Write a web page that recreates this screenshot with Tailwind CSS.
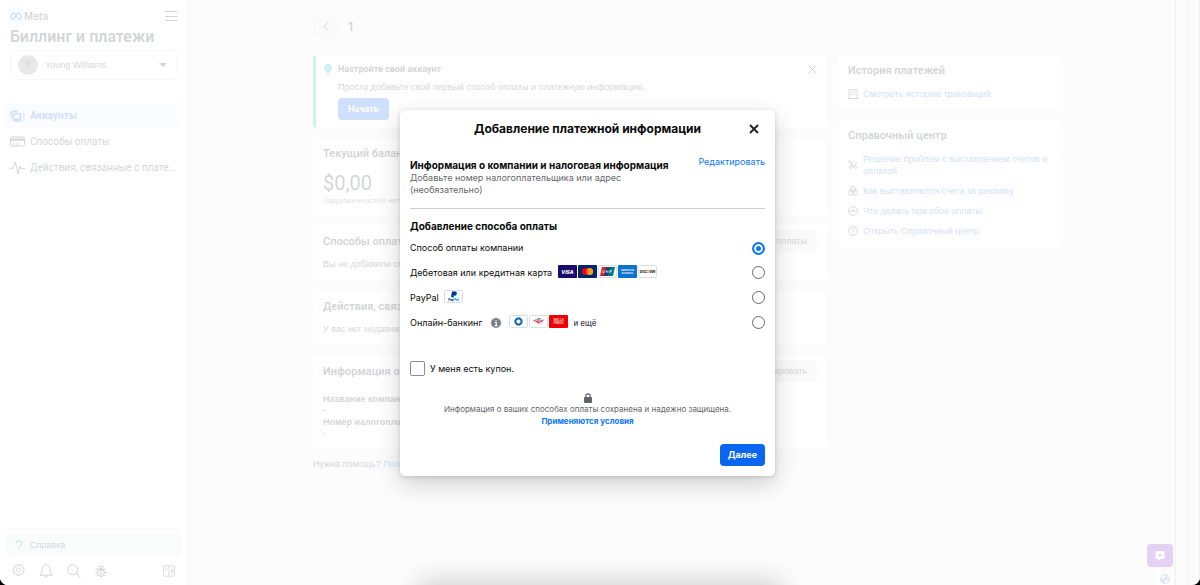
<!DOCTYPE html>
<html lang="ru">
<head>
    <meta charset="UTF-8">
    <meta name="viewport" content="width=device-width, initial-scale=1.0">
    <title>Биллинг и платежи</title>
    <script src="https://cdn.jsdelivr.net/npm/@tailwindcss/browser@4"></script>
</head>
<body class="bg-black">
<div class="relative flex h-screen overflow-hidden rounded-b-[8px] bg-[#f0f2f5] font-['Liberation_Sans',sans-serif] text-[9px] leading-[12px] text-[#1c2b33]">

    <!-- Sidebar -->
    <aside class="flex w-[187px] shrink-0 flex-col bg-white px-[5px] font-['Roboto',sans-serif]">
        <div class="flex items-center justify-between px-[5px] pt-2">
            <a href="#" class="flex items-center gap-[2px] font-['Inter',sans-serif] text-[10px] leading-[16px] font-medium">
                <svg class="h-[8px] w-[12px]" viewBox="0 0 24 16" fill="none" stroke="#0866ff" stroke-width="3"><path d="M2 11C2 6 4 2 7 2c5 0 6 12 11 12 3 0 4-2 4-4 0-5-2-8-5-8-5 0-6 12-12 12-2 0-3-1-3-3z"/></svg>
                Meta
            </a>
            <button type="button" aria-label="Меню">
                <svg class="size-[12px]" viewBox="0 0 12 12" stroke="#1c2b33" stroke-width="1"><path d="M0 1.500h12M0 6.500h12M0 10.500h12"/></svg>
            </button>
        </div>
        <h1 class="px-[5px] pt-1 text-[16px] leading-[18px] font-semibold whitespace-nowrap">Биллинг и платежи</h1>
        <button type="button" class="mx-[5px] mt-1 flex h-[30px] items-center rounded-[4px] border border-[#dadde1] px-[7px] font-['Liberation_Sans',sans-serif]">
            <span class="flex size-[20px] items-center justify-center rounded-full bg-[#8a8d91] text-[10px] font-bold text-[#4b4f56]">Y</span>
            <span class="ml-[7px] flex-1 text-left text-[9px]">Young Williams</span>
            <svg class="mr-[2px] h-[4px] w-[8px]" viewBox="0 0 8 4" fill="#1c2b33"><path d="M0 0h8L4 4z"/></svg>
        </button>

        <nav class="mt-[23px] flex flex-col gap-[1px] text-[10px]">
            <a href="#" class="flex h-[25px] items-center gap-[5px] rounded-[4px] bg-[#e5efff] px-[5px] font-bold text-[#0a66f5]">
                <svg class="h-[12px] w-[15px]" viewBox="0 0 15 12" fill="none" stroke="#0a66f5" stroke-width="1.500"><path d="M2 8 1 3q0-1.500 1.500-1.500L8 1"/><rect x="3.500" y="3.500" width="7" height="7.500" rx="1.500"/><path d="M3.500 9.500h7M13 4h1.500M13 7h1.500M13 10h1.500"/></svg>
                Аккаунты
            </a>
            <a href="#" class="flex h-[25px] items-center gap-[5px] px-[5px]">
                <svg class="h-[11px] w-[15px]" viewBox="0 0 15 11" fill="none" stroke="#1c2b33"><rect x=".5" y="1" width="14" height="9" rx="1.500"/><path d="M.5 3.700h14" stroke-width="2"/><path d="M2 8h3M6 8h3"/></svg>
                Способы оплаты
            </a>
            <a href="#" class="flex h-[25px] items-center gap-[5px] px-[5px] whitespace-nowrap">
                <svg class="h-[14px] w-[15px] shrink-0" viewBox="0 0 15 14" fill="none" stroke="#1c2b33" stroke-linejoin="round"><path d="M0 7.500h2.500L5.500.8 8 13.200l2-8 1.200 2.300H15"/></svg>
                Действия, связанные с плате...
            </a>
        </nav>

        <div class="mx-[5px] mt-auto border-t border-[#ccd0d5]"></div>
        <a href="#" class="mt-[5px] flex h-[22px] items-center rounded-[4px] bg-[#dcf5f0] pl-[10px] font-['Liberation_Sans',sans-serif]">
            <svg class="h-[11px] w-[8px]" viewBox="0 0 8 11" fill="none" stroke="#1f8a9c" stroke-width="1.200"><path d="M1 3.500C1 0 7 0 7 3.200 7 5.500 4 5 4 8"/><path d="M4 9.300v1.300"/></svg>
            <span class="ml-[7px]">Справка</span>
        </a>
        <div class="flex h-[29px] items-center gap-[14px] px-[7px]">
            <button type="button" aria-label="Настройки"><svg class="size-[13px]" viewBox="0 0 13 13" fill="none" stroke="#1c2b33" stroke-width=".9" stroke-linejoin="round"><path d="M5.300.6h2.400l.4 1.500 1.400-.8 1.700 1.700-.7 1.300 1.600.5v2.400l-1.600.5.8 1.500-1.700 1.600-1.500-.8-.4 1.600H5.300l-.5-1.600-1.400.8-1.700-1.700.8-1.400-1.600-.5V4.900l1.600-.5-.8-1.500L3.300 1.300l1.500.8z"/><circle cx="6.500" cy="6.100" r="2"/></svg></button>
            <button type="button" aria-label="Уведомления"><svg class="size-[14px]" viewBox="0 0 13 13" fill="none" stroke="#1c2b33" stroke-width=".9" stroke-linejoin="round"><path d="M1 10.500c1.800-2 1.500-4 2-6.500.5-4.200 6.500-4.200 7 0 .5 2.500.2 4.500 2 6.500zM5 10.600c.2 2 2.800 2 3 0"/></svg></button>
            <button type="button" aria-label="Поиск"><svg class="size-[14px]" viewBox="0 0 14 14" fill="none" stroke="#1c2b33"><circle cx="5.700" cy="5.700" r="4.900"/><path d="m9.300 9.300 4.200 4.200"/></svg></button>
            <button type="button" aria-label="Сообщить об ошибке"><svg class="size-[12px]" viewBox="0 0 12 12" fill="none" stroke="#1c2b33"><rect x="3" y="3.500" width="6" height="8" rx="3"/><path d="M4 3.500c0-2.700 4-2.700 4 0M6 4v7.500M3 5 1 3.500M3 7.500H.3M3.300 9.500 1 11M9 5l2-1.500M9 7.500h2.700M8.700 9.500 11 11M4 .3l.8 1M8 .3l-.8 1M3.200 5h5.600"/></svg></button>
            <button type="button" aria-label="Свернуть меню" class="ml-auto"><svg class="size-[12px]" viewBox="0 0 12 12" fill="none" stroke="#1c2b33" stroke-width=".8"><rect x=".5" y=".8" width="11" height="10.400" rx=".8"/><path d="M6 1v10M2 3h2M2 5.200h2M9.500 4.300 8 6l1.500 1.700z"/></svg></button>
        </div>
    </aside>

    <!-- Billing page -->
    <main class="flex-1">
        <div class="mx-auto w-[749px]">
            <div class="mt-[15px] flex h-[23px] items-center gap-[10px]">
                <button type="button" aria-label="Назад" class="flex h-[23px] w-[25px] items-center justify-center rounded-[4px] bg-[#e4e6eb]">
                    <svg class="h-[9px] w-[6px]" viewBox="0 0 6 9" fill="none" stroke="#1c2b33"><path d="M5 .5 1 4.500l4 4"/></svg>
                </button>
                <h2 class="font-['Inter',sans-serif] text-[12px] font-semibold">1</h2>
            </div>

            <div class="mt-[17px] grid grid-cols-[514px_1fr] items-start gap-[11px]">
                <div class="flex flex-col gap-[10px]">
                    <section class="flex h-[73px] rounded-[4px] border-l-[3px] border-[#00c79f] bg-white px-2 pt-2">
                        <svg class="mt-[1px] h-[11px] w-[8px]" viewBox="0 0 8 11" fill="#00c79f"><path d="M4 0a4 4 0 0 1 4 4c0 2-1.500 2.500-2 4H2C1.500 6.500 0 6 0 4a4 4 0 0 1 4-4zM2.400 8.700h3.200L5 10.500H3z"/></svg>
                        <div class="ml-[6px] flex-1">
                            <h3 class="font-['Roboto',sans-serif] font-bold">Настройте свой аккаунт</h3>
                            <p class="mt-[6px]">Просто добавьте свой первый способ оплаты и платежную информацию.</p>
                            <button type="button" class="mt-[5px] h-[22px] rounded-[4px] bg-[#0a66f5] px-[10px] font-['Roboto',sans-serif] font-bold text-white">Начать</button>
                        </div>
                        <button type="button" aria-label="Закрыть" class="mt-[2px] mr-[2px] self-start"><svg class="size-[9px]" viewBox="0 0 9 9" stroke="#1c2b33"><path d="m.5.5 8 8m0-8-8 8"/></svg></button>
                    </section>

                    <section class="h-[77px] rounded-[4px] bg-white px-[10px] pt-[10px]">
                        <h3 class="font-['Roboto',sans-serif] text-[11px] font-semibold">Текущий баланс</h3>
                        <p class="mt-[11px] font-['Roboto',sans-serif] text-[20px] leading-[24px]">$0,00</p>
                        <p class="text-[8px] text-[#606770]">Задолженностей нет.</p>
                    </section>

                    <section class="relative h-[55px] rounded-[4px] bg-white px-[10px] pt-[11px]">
                        <h3 class="font-['Roboto',sans-serif] text-[11px] font-semibold">Способы оплаты</h3>
                        <p class="mt-[10px]">Вы не добавили способов оплаты.</p>
                        <button type="button" class="absolute top-[5px] right-[10px] h-[22px] rounded-[4px] bg-[#e4e6eb] px-[10px]">Добавить способ оплаты</button>
                    </section>

                    <section class="h-[55px] rounded-[4px] bg-white px-[10px] pt-[11px]">
                        <h3 class="font-['Roboto',sans-serif] text-[11px] font-semibold">Действия, связанные с платежами</h3>
                        <p class="mt-[10px]">У вас нет недавних действий.</p>
                    </section>

                    <section class="relative h-[93px] rounded-[4px] bg-white px-[10px] pt-[11px]">
                        <h3 class="font-['Roboto',sans-serif] text-[11px] font-semibold">Информация о компании</h3>
                        <p class="mt-[15px] font-bold">Название компании</p>
                        <p class="leading-[11px]">-</p>
                        <p class="font-bold">Номер налогоплательщика</p>
                        <p class="leading-[11px]">-</p>
                        <button type="button" class="absolute top-[5px] right-[10px] h-[22px] rounded-[4px] bg-[#e4e6eb] px-[10px]">Редактировать</button>
                    </section>
                    <p>Нужна помощь? <a href="#" class="text-[#0a66f5]">Получить поддержку</a></p>
                </div>

                <div class="flex flex-col gap-[10px] text-[#0a5ad8]">
                    <section class="h-[55px] rounded-[4px] bg-white px-[10px] pt-[10px]">
                        <h3 class="font-['Roboto',sans-serif] text-[11px] font-semibold text-[#1c2b33]">История платежей</h3>
                        <a href="#" class="mt-[11px] flex items-center gap-[5px]">
                            <svg class="size-[10px]" viewBox="0 0 10 10" fill="none" stroke="#1c2b33" stroke-width=".8"><path d="M1 9.500V.5l1.500.7L4 .5l1.300.7L7 .5l1 .7 1.200-.7v9zM0 9.500h10M2.500 3.500H4M5.500 3.500h2M2.500 5.500H4M5.500 5.500h2"/></svg>
                            Смотреть историю транзакций
                        </a>
                    </section>
                    <section class="flex flex-col gap-2 rounded-[4px] bg-white px-[10px] pt-[10px] pb-[10px]">
                        <h3 class="mb-[3px] font-['Roboto',sans-serif] text-[11px] font-semibold text-[#1c2b33]">Справочный центр</h3>
                        <a href="#" class="flex items-center gap-[5px]">
                            <svg class="size-[10px] shrink-0" viewBox="0 0 11 11" fill="none" stroke="#1c2b33" stroke-width=".9"><path d="M3.500 4.500 7.800 8.800c1 1 2.500-.5 1.500-1.500L7 5.500M4.500 5.500 2 7.700C.5 9 2 10.500 3.300 9.200L9.500 3M7.500 1 6 2.500M10 3.500 8.500 5M.8 2.500 3 4.500l1.500-1.300L2.500 1C1.500.5.300 1.500.8 2.500z"/></svg>
                            Решение проблем с выставлением счетов и оплатой
                        </a>
                        <a href="#" class="flex items-center gap-[5px]">
                            <svg class="size-[10px] shrink-0" viewBox="0 0 10 10" fill="none" stroke="#1c2b33" stroke-width=".8"><circle cx="5" cy="3.300" r="2.800"/><circle cx="3.300" cy="6.500" r="2.800"/><circle cx="6.700" cy="6.500" r="2.800"/></svg>
                            Как выставляются счета за рекламу
                        </a>
                        <a href="#" class="flex items-center gap-[5px]">
                            <svg class="size-[10px] shrink-0" viewBox="0 0 10 10" fill="none" stroke="#1c2b33" stroke-width=".8"><circle cx="5" cy="5" r="4.500"/><path d="M2.500 5h5" stroke-width="1.200"/></svg>
                            Что делать при сбое оплаты
                        </a>
                        <a href="#" class="flex items-center gap-[5px]">
                            <svg class="size-[10px] shrink-0" viewBox="0 0 10 10" fill="none" stroke="#1c2b33" stroke-width=".8"><circle cx="5" cy="5" r="4.500"/><path d="M3.600 4.200c0-2 2.900-2 2.900-.2C6.500 5 5 5 5 6.200M5 7v.8"/></svg>
                            Открыть Справочный центр
                        </a>
                    </section>
                </div>
            </div>
        </div>
    </main>

    <!-- Right rail -->
    <div class="w-3 shrink-0 border-x border-[#b8bbc0]"></div>
    <div class="absolute inset-y-0 right-6 border-l border-[#b8bbc0]"></div>
    <div class="absolute right-[27px] bottom-0 flex flex-col items-end gap-[3px]">
        <button type="button" aria-label="Оставить отзыв" class="flex h-[23px] w-[26px] items-center justify-center rounded-[4px] bg-[#7a18c4]">
            <svg class="size-[10px]" viewBox="0 0 10 10"><path fill="#fff" d="M2 0h6q1.500 0 1.500 1.500v5Q9.500 8 8 8H5.500L3 10V8H2Q.5 8 .5 6.500v-5Q.5 0 2 0z"/><circle cx="5" cy="4" r="1.500" fill="#7a18c4"/></svg>
        </button>
        <button type="button" aria-label="Язык" class="flex h-[15px] w-[17px] items-center justify-center bg-white pt-[3px] shadow">
            <svg class="size-[10px]" viewBox="0 0 10 10"><circle cx="5" cy="5" r="5" fill="#5b78c4"/><path fill="#fff" d="M2 2l3-1 .5 1.500L4 4v1.500L2.500 5 1 4zM5 6l2-.5L8 7 6.500 9 5 8zM7 2l2 1v2L7.500 4z"/></svg>
        </button>
    </div>

    <div class="absolute inset-0 bg-white/80"></div>
    <div class="absolute inset-x-[420px] -bottom-5 h-5 rounded-[8px] shadow-[0_0_26px_4px_rgba(0,0,0,0.18)]"></div>

    <!-- Payment dialog -->
    <div class="absolute inset-0 flex justify-center">
        <div role="dialog" aria-labelledby="dialogTitle" class="mt-[110px] mr-[25px] flex h-fit w-[375px] flex-col rounded-[5px] bg-white px-[10px] pb-[10px] font-['Inter',sans-serif] text-[#0a0a0a] shadow-[0_8px_24px_rgba(0,0,0,0.18),0_1px_4px_rgba(0,0,0,0.15)]">
            <div class="grid h-[38px] grid-cols-[22px_1fr_22px] items-center">
                <h2 id="dialogTitle" class="col-start-2 text-center text-[12px] leading-[16px] font-bold">Добавление платежной информации</h2>
                <button type="button" aria-label="Закрыть" class="justify-self-center"><svg class="size-[10px]" viewBox="0 0 10 10" stroke="#1c1e21" stroke-width="1.800"><path d="m1 1 8 8m0-8L1 9"/></svg></button>
            </div>
            <div class="mt-2 flex justify-between border-b border-[#ccd0d5] pb-3">
                <div>
                    <h3 class="mt-[2px] text-[10px] leading-[14px] font-bold whitespace-nowrap">Информация о компании и налоговая информация</h3>
                    <p class="max-w-[250px] text-[9px] text-[#65676b]">Добавьте номер налогоплательщика или адрес (необязательно)</p>
                </div>
                <a href="#" class="text-[9px] text-[#0a78ff]">Редактировать</a>
            </div>

            <form>
                <h3 class="mt-[10px] mb-[3px] text-[10px] leading-[14px] font-bold">Добавление способа оплаты</h3>
                <div class="flex h-[24px] items-center justify-between">
                    <label for="company">Способ оплаты компании</label>
                    <input type="radio" id="company" name="method" checked class="size-[13px] appearance-none rounded-full border border-[#65676b] checked:border-2 checked:border-[#0a78ff] checked:bg-[#0a78ff] checked:shadow-[inset_0_0_0_2px_white]">
                </div>
                <div class="flex h-[25px] items-center">
                    <label for="card">Дебетовая или кредитная карта</label>
                    <div class="mb-[3px] ml-[6px] flex gap-[1px]">
                        <svg class="h-[13px] w-[19px]" viewBox="0 0 19 13"><rect width="19" height="13" rx="1" fill="#1a0a6b"/><text x="9.500" y="8.500" text-anchor="middle" font-size="5" font-weight="800" font-style="italic" fill="#fff">VISA</text></svg>
                        <svg class="h-[13px] w-[19px]" viewBox="0 0 19 13"><rect width="19" height="13" rx="1" fill="#00246b"/><circle cx="7.300" cy="6.500" r="3.500" fill="#eb001b"/><circle cx="11.700" cy="6.500" r="3.500" fill="#f79e1b"/><path d="M9.500 3.800a3.500 3.500 0 0 1 0 5.400 3.500 3.500 0 0 1 0-5.400z" fill="#ff5f00"/></svg>
                        <svg class="h-[13px] w-[19px]" viewBox="0 0 19 13"><rect x=".5" y=".5" width="18" height="12" rx="1" fill="#fff" stroke="#dadde1"/><path d="M4 2h5L7 11H2z" fill="#d8203a"/><path d="M8 2h4.500l-2 9H6z" fill="#17446f"/><path d="M12 2h5l-2 9h-5z" fill="#007b84"/><path d="M5 5.500l-.4 2h1.600l.4-2M8 7.500l.5-2 1.200 2 .5-2M11.500 8l.7-2.500h1.300l-.4 1.300h-1.200" fill="none" stroke="#fff" stroke-width=".6"/></svg>
                        <svg class="h-[13px] w-[19px]" viewBox="0 0 19 13"><rect width="19" height="13" rx="1" fill="#0b72cf"/><text x="9.500" y="6.200" text-anchor="middle" font-size="2.500" font-weight="600" fill="#fff">AMERICAN</text><text x="9.500" y="9.200" text-anchor="middle" font-size="2.500" font-weight="600" fill="#fff">EXPRESS</text></svg>
                        <svg class="h-[13px] w-[19px]" viewBox="0 0 19 13"><rect x=".5" y=".5" width="18" height="12" rx="1" fill="#fff" stroke="#dadde1"/><text x="9.500" y="7.700" text-anchor="middle" font-size="3" font-weight="800" fill="#222">DISC<tspan fill="#f47216">O</tspan>VER</text></svg>
                    </div>
                    <input type="radio" id="card" name="method" class="ml-auto size-[13px] appearance-none rounded-full border border-[#65676b]">
                </div>
                <div class="flex h-[25px] items-center">
                    <label for="paypal">PayPal</label>
                    <svg class="mb-[3px] ml-[5px] h-[13px] w-[19px]" viewBox="0 0 19 13"><rect x=".5" y=".5" width="18" height="12" rx="1" fill="#fff" stroke="#dadde1"/><path d="M8 1.500h3c2 0 2.200 1.600 1.500 2.800-.6 1-1.500 1.200-2.700 1.200L9.400 7H7z" fill="#003087"/><path d="M12.500 3c.8 1.800-.5 3.200-2.500 3.200L9.600 8H8.200l.6-2.500C11 5.500 12.200 4.800 12.500 3z" fill="#009cde"/><text x="9.500" y="10.800" text-anchor="middle" font-size="3" font-weight="800" font-style="italic" fill="#003087">Pay<tspan fill="#009cde">Pal</tspan></text></svg>
                    <input type="radio" id="paypal" name="method" class="ml-auto size-[13px] appearance-none rounded-full border border-[#65676b]">
                </div>
                <div class="flex h-[25px] items-center">
                    <label for="bank">Онлайн-банкинг</label>
                    <svg class="ml-[9px] size-[10px]" viewBox="0 0 10 10"><circle cx="5" cy="5" r="5" fill="#7b8088"/><path d="M5 2v1.300M3.800 4.500h1.400v3M3.600 7.600h2.900" stroke="#fff" stroke-width="1.100" fill="none"/></svg>
                    <div class="mb-[3px] ml-2 flex gap-[1px]">
                        <svg class="h-[13px] w-[19px]" viewBox="0 0 19 13"><rect x=".5" y=".5" width="18" height="12" rx="1" fill="#fff" stroke="#dadde1"/><path d="M8.300 3.500h2.400L12.500 5.300v2.400L10.700 9.500H8.300L6.500 7.700V5.300z" fill="none" stroke="#0b60b5" stroke-width="2"/></svg>
                        <svg class="h-[13px] w-[19px]" viewBox="0 0 19 13"><rect x=".5" y=".5" width="18" height="12" rx="1" fill="#fff" stroke="#dadde1"/><path d="m4.500 6 3-1.500M6.500 7l3-1.500M8.500 8l3-1.500" stroke="#e31837" stroke-width=".9"/><path d="m9 4.500 5 2.500M7.500 5.300 12.500 8M6.500 6.300 10.500 8.700" stroke="#e31837" stroke-width=".6"/><path d="m8 4.300 2-.8 2 .8M12 6l2.500-1" stroke="#012169" stroke-width=".7" fill="none"/></svg>
                        <svg class="h-[13px] w-[19px]" viewBox="0 0 19 13"><rect width="19" height="13" rx="1" fill="#f00000"/><text x="9.500" y="6.200" text-anchor="middle" font-size="3" font-weight="500" fill="#fff">WELLS</text><text x="9.500" y="9.200" text-anchor="middle" font-size="3" font-weight="500" fill="#fff">FARGO</text></svg>
                    </div>
                    <span class="ml-[5px] text-[8px] font-medium text-[#444950]">и ещё</span>
                    <input type="radio" id="bank" name="method" class="ml-auto size-[13px] appearance-none rounded-full border border-[#65676b]">
                </div>

                <div class="mt-[26px] flex items-center gap-[5px]">
                    <input type="checkbox" id="coupon" class="size-[15px] appearance-none rounded-[2px] border border-[#8a8d91]">
                    <label for="coupon">У меня есть купон.</label>
                </div>

                <div class="mt-[17px] flex flex-col items-center text-[8px] text-[#65676b]">
                    <svg class="h-[10px] w-[8px]" viewBox="0 0 8 10"><rect y="4" width="8" height="6" rx="1" fill="#606368"/><path d="M1.800 4.500V3a2.200 2.200 0 0 1 4.400 0v1.500" fill="none" stroke="#606368" stroke-width="1.200"/></svg>
                    <p>Информация о ваших способах оплаты сохранена и надежно защищена.</p>
                    <a href="#" class="font-bold text-[#0a78ff]">Применяются условия</a>
                </div>
                <div class="mt-[17px] flex justify-end">
                    <button type="submit" class="h-[22px] rounded-[4px] bg-[#0866f0] px-2 text-[9px] font-bold text-white">Далее</button>
                </div>
            </form>
        </div>
    </div>
</div>
</body>
</html>
